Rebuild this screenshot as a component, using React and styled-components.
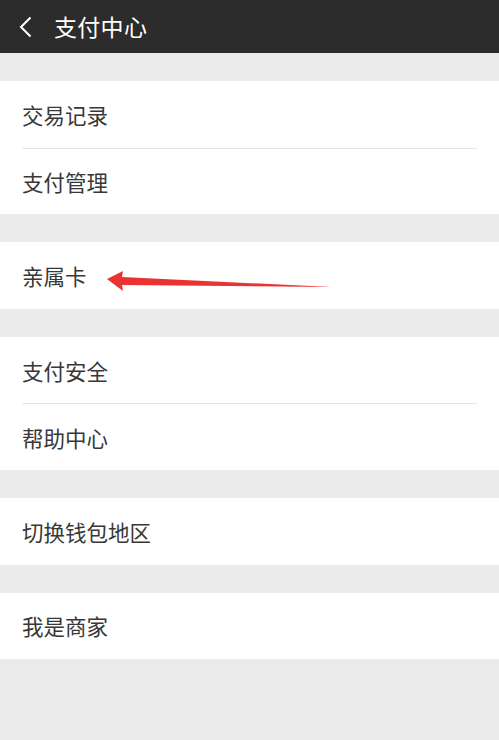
import React from "react";
import styled, { createGlobalStyle } from "styled-components";

const groups = [
  ["交易记录", "支付管理"],
  ["亲属卡"],
  ["支付安全", "帮助中心"],
  ["切换钱包地区"],
  ["我是商家"],
];

const GlobalStyle = createGlobalStyle`
  html, body {
    margin: 0;
    padding: 0;
    background: #ebebeb;
  }
  body {
    font-family: "Noto Sans CJK SC", "Noto Sans", sans-serif;
  }
`;

const Page = styled.div`
  width: 499px;
  min-height: 740px;
  background: #ebebeb;
`;

const Header = styled.div`
  height: 53px;
  background: #2c2c2c;
  display: flex;
  align-items: center;
  padding-left: 18px;
  gap: 20px;
`;

const Title = styled.div`
  color: #ffffff;
  font-size: 23px;
  line-height: 1;
  letter-spacing: 0.3px;
`;

const List = styled.div`
  display: flex;
  flex-direction: column;
  gap: 28px;
  padding-top: 28px;
`;

const Group = styled.div`
  background: #ffffff;
`;

const Row = styled.div`
  position: relative;
  height: 66.6px;
  display: flex;
  align-items: center;
  margin-left: 22px;
  margin-right: 22px;
  font-size: 21.5px;
  color: #383838;
  border-top: ${(p) => (p.$first ? "none" : "1px solid #e6e6e6")};
  box-sizing: border-box;
`;

const Arrow = styled.svg`
  position: absolute;
  left: 84px;
  top: 29px;
`;

const Back = () => (
  <svg width="16" height="22" viewBox="0 0 16 22">
    <path d="M12.5 1.5 L3 11 L12.5 20.5" fill="none" stroke="#fff" strokeWidth="2" />
  </svg>
);

const RedArrow = () => (
  <Arrow width="230" height="20" viewBox="0 0 230 20">
    <path
      d="M1 4 L17 -4 L16 2 L226 12 L16 10 L17 16 Z"
      transform="translate(0 4)"
      fill="#ea3330"
    />
  </Arrow>
);

export default function App() {
  return (
    <Page>
      <GlobalStyle />
      <Header>
        <Back />
        <Title>支付中心</Title>
      </Header>
      <List>
        {groups.map((g, i) => (
          <Group key={i}>
            {g.map((label, j) => (
              <Row key={label} $first={j === 0}>
                {label}
                {label === "亲属卡" && <RedArrow />}
              </Row>
            ))}
          </Group>
        ))}
      </List>
    </Page>
  );
}
